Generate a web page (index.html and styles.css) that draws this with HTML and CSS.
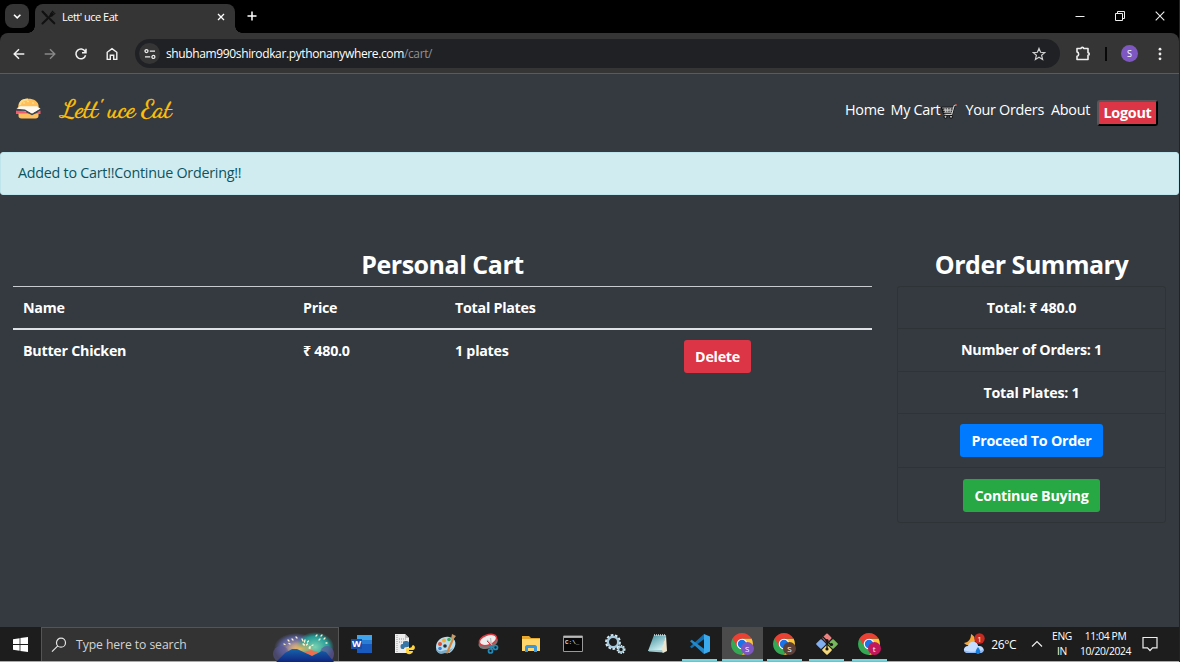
FILE: index.html
```html
<!DOCTYPE html>
<html lang="en">
<head>
<meta charset="utf-8">
<title>Lett' uce Eat</title>
<link rel="stylesheet" href="styles.css">
</head>
<body>
<svg class="defs" width="0" height="0">
  <defs>
    <symbol id="chrome" viewBox="0 0 22 22">
      <path d="M11 11 1.5 5.5A11 11 0 0 0 11 22l4.5-8.4z" fill="#34a853"/>
      <path d="M11 11V5.5h9.5A11 11 0 0 1 11 22l4.7-8.3z" fill="#fcc934"/>
      <path d="M1.500 5.500A11 11 0 0 1 20.500 5.500H11L6.200 13.600z" fill="#e94235"/>
      <circle cx="11" cy="11" r="5.3" fill="#fff"/><circle cx="11" cy="11" r="4.2" fill="#1a73e8"/>
    </symbol>
  </defs>
</svg>
<div class="screen">
  <header class="tabstrip">
    <button class="tab-search"><svg width="24" height="24" viewBox="0 0 24 24"><path d="m9 10.7 3.2 3.1 3.2-3.1" fill="none" stroke="#fff" stroke-width="1.6"/></svg></button>
    <div class="tab">
      <svg class="favicon" width="15" height="15" viewBox="0 0 15 15"><path d="M1.5 1.5 6 6.5M9 9l4.3 4.3M1.5 13.5 11 4.2" stroke="#111" stroke-width="2.1" stroke-linecap="round"/><path d="m1 1 5.5 4-1 2z" fill="#111"/><path d="m9.2 4.3 2.8-3.5M10.2 5l3-3.2M11 5.9l3.3-2.8M9 4.3l2.2 2.3" stroke="#111" stroke-width="1.1"/></svg>
      <span class="tab-title">Lett' uce Eat</span>
      <svg width="8" height="8" viewBox="0 0 8 8"><path d="m1 1 6 6M7 1 1 7" stroke="#fff" stroke-width="1.3"/></svg>
    </div>
    <svg class="new-tab" width="10" height="10" viewBox="0 0 10 10"><path d="M5 .5v9M.5 5h9" stroke="#fff" stroke-width="1.5"/></svg>
    <div class="window-controls">
      <svg width="10" height="10" viewBox="0 0 10 10"><path d="M.5 5.5h9" stroke="#eee"/></svg>
      <svg width="10" height="10" viewBox="0 0 10 10"><path d="M2.5 2.5v-2h7v7h-2M.5 2.5h7v7h-7z" fill="none" stroke="#eee"/></svg>
      <svg width="10" height="10" viewBox="0 0 10 10"><path d="m.7.7 8.6 8.6M9.3.7.7 9.3" stroke="#eee" stroke-width="1.1"/></svg>
    </div>
  </header>
  <div class="toolbar-frame">
  <div class="toolbar">
    <div class="nav-icons">
      <svg width="14" height="14" viewBox="0 0 14 14" fill="none" stroke="#f0f0f0" stroke-width="1.5"><path d="M12.3 7H2.3M7 2.2 2.2 7 7 11.8"/></svg>
      <svg width="14" height="14" viewBox="0 0 14 14" fill="none" stroke="#888" stroke-width="1.4"><path d="M1.7 7h10M7 2.2 11.8 7 7 11.8"/></svg>
      <svg width="14" height="14" viewBox="0 0 14 14" fill="none" stroke="#f0f0f0" stroke-width="1.5"><path d="M11.6 8.2A4.9 4.9 0 1 1 11.2 4.6M12 1.7v4H8"/></svg>
      <svg width="14" height="14" viewBox="0 0 14 14" fill="none" stroke="#f0f0f0" stroke-width="1.4"><path d="M2.2 12.4V5.3L7 1.7l4.8 3.6v7.1H8.7V8.2H5.3v4.2z"/></svg>
    </div>
    <div class="omnibox">
      <span class="site-info"><svg width="12" height="12" viewBox="0 0 12 12" fill="none" stroke="#eee" stroke-width="1.3"><circle cx="2.5" cy="3.1" r="1.5"/><path d="M5.8 3.1h5.2M1 8.9h5.2"/><circle cx="9.4" cy="8.9" r="1.5"/></svg></span>
      <span class="url">shubham990shirodkar.pythonanywhere.com<span class="path">/cart/</span></span>
      <svg class="star" width="14" height="14" viewBox="0 0 14 14"><path d="m7 1.4 1.6 3.9 4.1.3-3.1 2.7 1 4.1L7 10.2l-3.6 2.2 1-4.1L1.3 5.6l4.1-.3z" fill="none" stroke="#d0d0d0" stroke-width="1.2"/></svg>
    </div>
    <svg class="puzzle" width="16" height="16" viewBox="0 0 16 16"><path d="M2 2.500h4c.1-1.500 2.600-1.500 2.700 0H13v4.200c1.700.1 1.700 2.500 0 2.600v4.200H2v-3.100c2.200-.3 2.200-4.200 0-4.500z" fill="none" stroke="#eee" stroke-width="1.6" stroke-linejoin="round"/></svg>
    <span class="divider"></span>
    <span class="avatar">S</span>
    <svg class="kebab" width="4" height="14" viewBox="0 0 4 14" fill="#eee"><circle cx="2" cy="2.2" r="1.4"/><circle cx="2" cy="7" r="1.4"/><circle cx="2" cy="11.8" r="1.4"/></svg>
  </div>
  </div>

  <main class="page">
    <nav class="navbar">
      <svg class="burger" width="31" height="22" viewBox="0 0 31 22">
        <path d="M2.2 9C2.2 3.4 6 .8 12 .8S22.700 3.400 22.700 9z" fill="#ffc05b"/><path d="M4 7C4.500 3 8 1.500 12 1.500" stroke="#ffdc83" stroke-width="2" fill="none"/>
        <g fill="#fff4bd"><circle cx="8" cy="5" r=".7"/><circle cx="12" cy="3.500" r=".7"/><circle cx="17" cy="5" r=".7"/></g>
        <path d="M1 11.200c0-2 2-2.200 4-2.200h15c2 0 4 .2 4 2.200z" fill="#78584b"/><path d="M0 12.500h24.500V16H0z" fill="#f15b6c"/><path d="M.5 10.500 4 8.300h17l3.500 2.400-8 5z" fill="#fff8ee"/><path d="m.5 10.800 8.500.7 7 4.300 8.500-5v1.500L16.500 17 9 13l-8.500-.5z" fill="#394a52"/>
        <path d="M2.500 15.500h20v2.300c0 2-1 2.700-3 2.700h-14c-2 0-3-.7-3-2.700z" fill="#ffbf5d"/><path d="m10 13.500 6 3 6-3" fill="none" stroke="#354650" stroke-width="1.300"/><path d="M21 21h6m2-1h1" stroke="#26384d" stroke-width="1"/>
      </svg>
      <span class="brand">Lett' uce Eat</span>
      <div class="links">
        <a class="link home">Home</a>
        <a class="link cart">My Cart</a>
        <svg class="cart-icon" width="16" height="15" viewBox="0 0 16 15"><path d="M14.800 1.300h-1.600L10.800 10.300H3.600M1.200 3.800l1.700 5h8L12.600 3.800z" fill="#777" stroke="#090909" stroke-width="2.200" stroke-linejoin="round"/><path d="M14.700 1.300h-1.500l-2.500 9.100H3.500" fill="none" stroke="#d2d2d2" stroke-width="1.100"/><path d="M1.200 4h11M1.800 6.200h10M2.600 8.300h8.800M4 4l.6 4.300M6.500 4l.3 4.300M9.400 4l-.3 4.300" stroke="#d5d5d5" stroke-width=".8"/><g fill="#bbb" stroke="#090909"><circle cx="4.500" cy="12.800" r="1.500"/><circle cx="10" cy="12.800" r="1.500"/></g><path d="M14 1h1.700" stroke="#ef6652" stroke-width="1.500"/></svg>
        <a class="link orders">Your Orders</a>
        <a class="link about">About</a>
        <button class="logout">Logout</button>
      </div>
    </nav>
    <div class="alert">Added to Cart!!Continue Ordering!!</div>
    <div class="content">
      <section class="cart-panel">
        <h1 class="title">Personal Cart</h1>
        <table class="items">
          <colgroup><col class="c-name"><col class="c-price"><col class="c-plates"><col></colgroup>
          <thead><tr><th>Name</th><th>Price</th><th>Total Plates</th><th></th></tr></thead>
          <tbody><tr><td>Butter Chicken</td><td>₹ 480.0</td><td>1 plates</td><td><button class="btn delete">Delete</button></td></tr></tbody>
        </table>
      </section>
      <aside class="summary">
        <h1 class="title">Order Summary</h1>
        <div class="list">
          <div class="entry">Total: ₹ 480.0</div>
          <div class="entry">Number of Orders: 1</div>
          <div class="entry">Total Plates: 1</div>
          <div class="entry action"><button class="btn proceed">Proceed To Order</button></div>
          <div class="entry action"><button class="btn continue">Continue Buying</button></div>
        </div>
      </aside>
    </div>
  </main>

  <footer class="taskbar">
    <div class="start"><svg width="15" height="15" viewBox="0 0 15 15" fill="#fff"><path d="M0 2.200 6.600 1.200v5.900H0zM7.400 1.100 15 0v7.100H7.400zM0 7.900h6.600v5.900L0 12.800zM7.400 7.900H15V15l-7.600-1.100z"/></svg></div>
    <div class="search">
      <svg class="lens" width="16" height="16" viewBox="0 0 16 16" fill="none" stroke="#e4e4e4" stroke-width="1.200"><circle cx="10" cy="5.700" r="4.500"/><path d="M6.800 8.900 1 14.700"/></svg>
      <span class="search-text">Type here to search</span>
      <svg class="fireworks" width="62" height="32" viewBox="0 0 62 32">
        <defs><radialGradient id="glowA"><stop offset="0" stop-color="#c8a5a6"/><stop offset=".7" stop-color="#59609a"/><stop offset="1" stop-color="#59609a" stop-opacity="0"/></radialGradient><radialGradient id="glowB"><stop offset="0" stop-color="#7bd2b1"/><stop offset=".7" stop-color="#269c97"/><stop offset="1" stop-color="#269c97" stop-opacity="0"/></radialGradient><radialGradient id="glowC"><stop offset="0" stop-color="#efb95c"/><stop offset="1" stop-color="#deb15a" stop-opacity="0"/></radialGradient><linearGradient id="hill" x2="0" y2="1"><stop stop-color="#1664ab"/><stop offset="1" stop-color="#10247e"/></linearGradient></defs>
        <ellipse cx="23" cy="18" rx="22" ry="15" fill="url(#glowA)"/><ellipse cx="42" cy="17" rx="19" ry="15" fill="url(#glowB)"/><ellipse cx="8" cy="24" rx="8" ry="8" fill="#5a568f" opacity=".6"/><ellipse cx="54" cy="24" rx="7" ry="8" fill="#5d559b" opacity=".7"/>
        <ellipse cx="27" cy="19" rx="15" ry="8" fill="url(#glowC)"/><path d="m31 22 7-2 7 2-6 4z" fill="#f26d4b"/>
        <path d="m3 32 9-9 7-4h5l15 7 10-5 4 1 8 10z" fill="url(#hill)"/>
        <g stroke="#fff5d0" stroke-width="1.300" stroke-linecap="round"><path d="m23 7 1 1m-5 1 1 1m-5 0 1 1m-5 3 1 .5m4-1 1 .5M29 9l1 2m2-1-.5 2m4-1-1 1m-4 2 1 1m3-1-1 1m4 2h-1M44 5l-1 1m6-1-1 1m4 2-1 1m2 4h1m-8-3 1-1M30 14l1 1m5 3 1 .5m2-3 1-.5"/></g>
      </svg>
    </div>
    <div class="apps">
      <div class="app"><svg width="22" height="20" viewBox="0 0 22 20"><path d="M6 1h15v18H6z" fill="#185abd"/><path d="M6 1h15v5H6z" fill="#41a5ee"/><path d="M6 6h15v4H6z" fill="#2b7cd3"/><path d="M0 5h11v10H0z" fill="#174ea6"/><text x="1" y="13.300" font-family="Open Sans" font-weight="700" font-size="9.500" fill="#fff">W</text></svg></div>
      <div class="app"><svg width="22" height="22" viewBox="0 0 22 22"><path d="M2 1h10l4 4v15H2z" fill="#ededed"/><path d="M12 1v4h4" fill="#bbb"/><path d="M4 2v17M6 6h7M6 9h6" stroke="#999" stroke-dasharray="1 1"/><path d="M10 12V9.500c0-2 6-2 6 0V13c0 2-5 0-5 3H9c-2 0-2-5 0-5h5" fill="#3976a8"/><path d="M20 12c3 1 2 5 0 5h-4v1h4c0 4-7 4-7 1v-3c0-2 6 0 6-3z" fill="#ffd544"/></svg></div>
      <div class="app"><svg width="22" height="22" viewBox="0 0 22 22"><path d="M1 14C1 7 8 3 14 4c8 1 8 9 3 14-4 4-6 1-7 1-4 3-9 1-9-5z" fill="#b9dcec"/><path d="M1 15c3 5 6 3 9 2 2 0 4 1 8-2-4 7-7 5-8 5-4 2-9 0-9-5z" fill="#7ba9c5"/><circle cx="5" cy="11" r="2" fill="#e6492d"/><circle cx="9" cy="7.500" r="2" fill="#f6ae32"/><circle cx="14" cy="6.500" r="1.800" fill="#3ea85c"/><circle cx="5" cy="15.500" r="1.800" fill="#427ed1"/><circle cx="10" cy="13" r="1.800" fill="#292f35"/><path d="m12 20 6-14" stroke="#d7843b" stroke-width="2"/><path d="m16 6 1-5 4 2-3 4z" fill="#c59b6b"/></svg></div>
      <div class="app"><svg width="22" height="22" viewBox="0 0 22 22"><ellipse cx="11" cy="9.500" rx="10" ry="6" fill="#777" transform="rotate(-20 11 9)"/><ellipse cx="11" cy="7" rx="9" ry="5" fill="#eee" stroke="#dc3c42" stroke-width="1.500" transform="rotate(-20 11 7)"/><path d="m10 7 5 5M13.500 5l1 8" stroke="#bbb" stroke-width="1.300"/><path d="m10 8 5 5" stroke="#d33b43"/><g fill="none" stroke="#2689b7" stroke-width="1.700"><circle cx="13.500" cy="18" r="2"/><circle cx="18.500" cy="14.500" r="2"/><path d="m14 16 1-4m1 3-4-3"/></g></svg></div>
      <div class="app"><svg width="20" height="20" viewBox="0 0 20 20"><path d="M1 2h7l2 2h9v13H1z" fill="#e8a72d"/><path d="M1 5h18v12H1z" fill="#ffd66b"/><path d="M4 18v-5c0-1 1-2 2-2h8c1 0 2 1 2 2v5h-3v-4H7v4z" fill="#3a97dc"/></svg></div>
      <div class="app"><svg width="20" height="18" viewBox="0 0 20 18"><path d="M.5 1h19v15.500H.5z" fill="#080808" stroke="#999"/><path d="M1 2h18" stroke="#ddd" stroke-width="1.500"/><text x="2" y="8.500" font-family="Liberation Mono" font-weight="700" font-size="6" fill="#ddd">C:\_</text></svg></div>
      <div class="app"><svg width="22" height="22" viewBox="0 0 22 22"><circle cx="9" cy="9" r="6.600" fill="none" stroke="#d9edf7" stroke-width="2.600" stroke-dasharray="2.500 1.600"/><circle cx="9" cy="9" r="5.200" fill="none" stroke="#a6cadc" stroke-width="2.400"/><circle cx="17" cy="16.500" r="3.700" fill="none" stroke="#eef7fa" stroke-width="1.500" stroke-dasharray="1.400 1"/><circle cx="17" cy="16.500" r="2.600" fill="none" stroke="#a9cedd" stroke-width="1.700"/></svg></div>
      <div class="app"><svg width="22" height="22" viewBox="0 0 22 22"><defs><linearGradient id="note" x2=".6" y2="1"><stop stop-color="#3a8a98"/><stop offset="1" stop-color="#d4f4f6"/></linearGradient></defs><path d="M7 2h12l-4 16H1z" fill="url(#note)"/><path d="m19 2 1 16-4 2-2-2z" fill="#ece5ce"/><path d="M7 2h12" stroke="#d9e0e0" stroke-width="1.500" stroke-dasharray="1 1"/><path d="M1 17h14l1 2.500L2 18.500z" fill="#9fc8cc"/></svg></div>
      <div class="app running"><svg width="22" height="22" viewBox="0 0 22 22"><path d="M15 1 1 13.700l1.700 1.600L16 5.500z" fill="#1070b3"/><path d="M2.700 6.700 1 8.300 15 21l1-4.500z" fill="#2489ca"/><path d="m15 1 6 2.400v15.200L15 21z" fill="#3aa9ee"/></svg></div>
      <div class="app running active"><svg width="22" height="22"><use href="#chrome"/></svg><span class="badge purple">S</span></div>
      <div class="app running"><svg width="22" height="22"><use href="#chrome"/></svg><span class="badge brown">S</span></div>
      <div class="app running"><svg width="22" height="22" viewBox="0 0 22 22"><g stroke-linejoin="round" stroke-width="2"><path d="m11 1.500 3.500 3.500-3.500 3.500L7.500 5z" fill="#e98280" stroke="#e98280"/><path d="m5 7.200 3.800 3.800L5 14.800 1.200 11z" fill="#82aff0" stroke="#82aff0"/><path d="m17 7.200 3.800 3.800-3.800 3.800-3.800-3.800z" fill="#78b85c" stroke="#78b85c"/><path d="m11 13.200 3.800 3.800-3.800 3.800L7.200 17z" fill="#f5d879" stroke="#f5d879"/></g><path d="m7 4 8 8m-4-4v8" stroke="#181818" stroke-width="1.300"/><g fill="#181818"><circle cx="11" cy="7.500" r="1.600"/><circle cx="15.500" cy="11.500" r="1.600"/><circle cx="11" cy="16" r="1.600"/></g></svg></div>
      <div class="app running"><svg width="22" height="22"><use href="#chrome"/></svg><span class="badge pink">t</span></div>
    </div>
    <div class="tray">
      <svg class="weather" width="22" height="22" viewBox="0 0 22 22"><path d="M8 1c0 5-2 8-7 9 3 4 11 3 11-3 0-3-2-5-4-6z" fill="#f5a938"/><path d="M5 20c-6 0-5-7 0-7 1-6 10-5 10 0 7-1 7 7 2 7z" fill="#c5ddff"/><path d="M1 17c1 4 5 3 7 3h9c2 0 4-1 4-4-4 3-15 4-20 1z" fill="#8eb8f5"/><path d="M15 14c-4 5-2 7 0 7s4-2 0-7z" fill="#167cdb"/><circle cx="16.500" cy="5.500" r="5.200" fill="#c42c23"/><text x="16.500" y="8.500" text-anchor="middle" font-family="Open Sans" font-size="8" fill="#fff">1</text></svg>
      <span class="temp">26°C</span>
      <svg class="chevron" width="12" height="8" viewBox="0 0 12 8"><path d="M1 6.500 6 1.500l5 5" fill="none" stroke="#eee" stroke-width="1.200"/></svg>
      <div class="lang"><span>ENG</span><span>IN</span></div>
      <div class="clock"><span>11:04 PM</span><span class="date">10/20/2024</span></div>
      <svg class="notice" width="16" height="16" viewBox="0 0 16 16"><path d="M1 1.500h14v10.300h-4.500L8 14.500l-2.500-2.700H1z" fill="none" stroke="#eee" stroke-width="1.200"/></svg>
    </div>
  </footer>
</div>
</body>
</html>
```
FILE: styles.css
```css
* { box-sizing: border-box; }
body { margin: 0; font-family: "Open Sans", "Noto Sans", sans-serif; background: #343a40; color: #fff; overflow: hidden; }
button { font-family: inherit; letter-spacing: inherit; }
svg { display: block; flex-shrink: 0; }
.defs { position: absolute; }
.screen { width: 1180px; height: 662px; display: flex; flex-direction: column; border-right: 1px solid #202327; }

.tabstrip { height: 33px; background: #000; display: flex; align-items: flex-start; padding: 4px 0 0 5px; flex-shrink: 0; }
.tab-search { width: 24px; height: 24px; border: 0; border-radius: 8px; background: #353535; padding: 0; }
.tab { width: 200px; height: 29px; margin-left: 6px; padding: 0 10px 3px 6px; background: #353535; border-radius: 8px 8px 0 0; display: flex; align-items: center; position: relative; }
.tab::before, .tab::after { content: ""; position: absolute; bottom: 0; width: 7px; height: 7px; }
.tab::before { left: -7px; background: radial-gradient(circle at 0 0, transparent 6.5px, #353535 7px); }
.tab::after { right: -7px; background: radial-gradient(circle at 100% 0, transparent 6.5px, #353535 7px); }
.tab-title { font: 11px/16px "Open Sans", sans-serif; letter-spacing: -.5px; margin-left: 6px; flex: 1; }
.new-tab { margin: 7px 0 0 12px; }
.window-controls { display: flex; gap: 30px; margin: 7px 14px 0 auto; }

.toolbar-frame { background: #000; flex-shrink: 0; }
.toolbar { height: 41px; background: linear-gradient(#5b5b5b, #5b5b5b) bottom / 100% 1px no-repeat #353535; border-radius: 8px 8px 0 0; display: flex; align-items: center; padding-left: 12px; }
.nav-icons { display: flex; gap: 17px; }
.omnibox { width: 925px; height: 29px; margin-left: 16px; padding: 0 14px 0 4px; border-radius: 15px; background: #202124; display: flex; align-items: center; }
.site-info { width: 21px; height: 21px; border-radius: 50%; background: #353535; display: grid; place-items: center; }
.url { font-size: 12px; line-height: 18px; margin-left: 6px; flex: 1; white-space: nowrap; letter-spacing: -.37px; }
.path { color: #8f9193; }
.puzzle { margin-left: 15px; }
.divider { width: 2px; height: 14px; background: #080808; margin-left: 14px; }
.avatar { width: 17px; height: 17px; border-radius: 50%; background: #7e57c2; font-size: 9px; line-height: 17px; text-align: center; margin-left: 14px; }
.kebab { margin-left: 20px; }

.page { flex: 1; background: #343a40; min-height: 0; }
.navbar { height: 78px; display: flex; padding-left: 16px; }
.burger { margin-top: 24px; }
.brand { width: 115px; margin: 17px 0 0 14px; color: #ffc107; font: 26px/36px "Dancing Script", "Liberation Serif", cursive; white-space: nowrap; letter-spacing: -.25px; -webkit-text-stroke: .35px #ffc107; }
.links { margin: 25px 21px 0 auto; display: flex; align-items: flex-start; letter-spacing: -.3px; }
.link { font-size: 14.4px; line-height: 22px; white-space: nowrap; }
.cart { margin-left: 6px; }
.cart-icon { margin: 5px 8px 0 1px; }
.about { margin-left: 7px; }
.logout { width: 61px; height: 26px; margin: 1px 0 0 7px; padding: 0; border: 2px outset #17191c; border-color: #5a5458 #151515 #151515 #5a5458; border-radius: 3px; background: #dc3545; color: #fff; font-weight: 700; font-size: 14.4px; line-height: 20px; }
.alert { height: 43px; background: #d1ecf1; border: 1px solid #bee5eb; border-radius: 3px; color: #0c5460; padding: 0 17px; font-size: 14.3px; line-height: 40px; letter-spacing: -.24px; }
.content { display: flex; gap: 25px; padding: 50px 13px 0; }
.title { margin: 0; height: 41px; text-align: center; font-size: 25px; line-height: 38px; font-weight: 700; letter-spacing: -.48px; }
.cart-panel { width: 859px; }
.items { width: 100%; table-layout: fixed; border-collapse: separate; border-spacing: 0; border-top: 1px solid #c9cccf; font-size: 14.3px; line-height: 21px; font-weight: 700; text-align: left; letter-spacing: -.27px; }
.items th { height: 43px; padding: 0 10px 1px; border-bottom: 2px solid #dee2e6; }
.items td { padding: 10px; vertical-align: top; }
.c-name { width: 280px; }
.c-price { width: 152px; }
.c-plates { width: 229px; }
.btn { height: 33px; padding: 0; border: 0; border-radius: 3px; color: #fff; font-size: 14.3px; font-weight: 700; line-height: 33px; display: block; }
.delete { width: 67px; background: #dc3545; }
.proceed { width: 143px; background: #007bff; }
.continue { width: 137px; background: #28a745; }
.summary { width: 269px; }
.list { border: 1px solid #2e3338; border-radius: 3px; letter-spacing: -.25px; }
.entry { height: 42.300px; display: flex; align-items: center; justify-content: center; border-bottom: 1px solid #2e3338; font-size: 14.3px; font-weight: 700; }
.action { height: 54.400px; }
.entry:last-child { border-bottom: 0; height: 53.500px; }

.taskbar { height: 35px; background: #1d1d1d; border-bottom: 1px solid #aaa; display: flex; flex-shrink: 0; }
.start { width: 41px; display: grid; place-items: center; }
.search { width: 298px; background: #333; border: 1px solid #555; border-bottom: 0; display: flex; align-items: center; padding-left: 9px; }
.search-text { color: #d3d3d3; font-size: 12.2px; margin-left: 9px; letter-spacing: -.08px; }
.fireworks { margin: 2px 3px 0 auto; }
.apps { display: flex; gap: 1.300px; margin-left: 2px; }
.app { width: 41px; height: 34px; display: grid; place-items: center; position: relative; }
.running { background: linear-gradient(#76d5dc, #76d5dc) center bottom / 35px 2px no-repeat; }
.active { background: linear-gradient(#76d5dc, #76d5dc) center bottom / 41px 2px no-repeat #4b4b4b; }
.badge { position: absolute; left: 19px; top: 15px; width: 13px; height: 13px; border-radius: 50%; font-size: 8px; line-height: 13px; text-align: center; }
.purple { background: #7e57c2; }
.brown { background: #5d4037; }
.pink { background: #c2185b; }
.tray { margin-left: auto; display: flex; align-items: center; padding-right: 21px; white-space: nowrap; }
.temp { font-size: 12px; margin-left: 6px; letter-spacing: -.4px; }
.chevron { margin-left: 15px; }
.lang, .clock { display: flex; flex-direction: column; align-items: center; font-size: 10.300px; line-height: 15px; letter-spacing: -.35px; }
.lang { margin-left: 9px; }
.clock { margin-left: 8px; width: 51px; }
.notice { margin-left: 11px; }
```
